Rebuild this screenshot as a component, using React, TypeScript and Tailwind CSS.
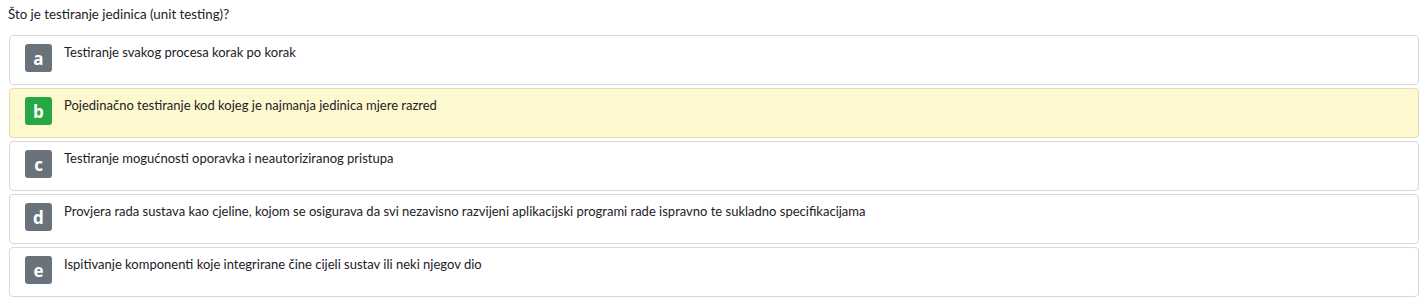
import React from "react";

const options: { letter: string; text: string; highlight?: boolean }[] = [
  { letter: "a", text: "Testiranje svakog procesa korak po korak" },
  { letter: "b", text: "Pojedinačno testiranje kod kojeg je najmanja jedinica mjere razred", highlight: true },
  { letter: "c", text: "Testiranje mogućnosti oporavka i neautoriziranog pristupa" },
  { letter: "d", text: "Provjera rada sustava kao cjeline, kojom se osigurava da svi nezavisno razvijeni aplikacijski programi rade ispravno te sukladno specifikacijama" },
  { letter: "e", text: "Ispitivanje komponenti koje integrirane čine cijeli sustav ili neki njegov dio" },
];

export default function App() {
  return (
    <div
      className="w-[1428px] h-[305px] bg-white text-[#1d2125] pl-[9px] pr-[9px] pt-[4px]"
      style={{ fontFamily: 'Lato, "Open Sans", sans-serif' }}
    >
      <div className="text-[13.3px] leading-[20px] h-[31px] -ml-[1px]">Što je testiranje jedinica (unit testing)?</div>
      <div className="flex flex-col gap-[3px]">
        {options.map((o) => (
          <div
            key={o.letter}
            className={`flex items-start h-[50px] rounded-[4px] border pl-[15px] pt-[8px] ${
              o.highlight ? "bg-[#fdf8cd] border-[#e3deb0]" : "bg-white border-[#d8d8d8]"
            }`}
          >
            <div
              className={`w-[27px] h-[28px] rounded-[3px] flex items-center justify-center text-white font-bold text-[17px] leading-none shrink-0 ${
                o.highlight ? "bg-[#27a744]" : "bg-[#6a737b]"
              }`}
              style={{ fontFamily: '"Open Sans", sans-serif' }}
            >
              {o.letter}
            </div>
            <div className="ml-[12px] text-[13px] leading-[20px] -mt-[2px]">{o.text}</div>
          </div>
        ))}
      </div>
    </div>
  );
}
